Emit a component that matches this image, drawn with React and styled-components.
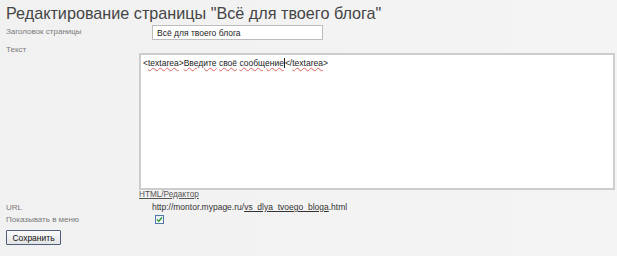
import styled, { createGlobalStyle } from "styled-components";

const GlobalStyle = createGlobalStyle`
  html, body {
    margin: 0;
    padding: 0;
    background: #f2f2f2;
  }
  body {
    font-family: "Liberation Sans", Arial, sans-serif;
  }
`;

const Page = styled.div`
  width: 617px;
  height: 256px;
  padding: 0 2px 0 6px;
  box-sizing: border-box;
  background: linear-gradient(to right, #f1f1f1, #f4f4f4);
  overflow: hidden;
`;

const Title = styled.h1`
  margin: 0;
  padding-top: 1px;
  font-size: 16.2px;
  line-height: 24px;
  font-weight: normal;
  color: #454545;
`;

const Row = styled.div`
  display: grid;
  grid-template-columns: 133px 1fr;
  align-items: start;
  margin-top: ${({ $gap }) => $gap || 0}px;
`;

const Label = styled.div`
  font-size: 8px;
  line-height: 11px;
  color: #7a7a7a;
  padding-top: ${({ $top }) => $top || 0}px;
`;

const TitleInput = styled.input`
  margin: 0 0 0 13px;
  width: 171px;
  height: 15px;
  box-sizing: border-box;
  border: 1px solid #bdbdbd;
  background: #fff;
  padding: 0 4px;
  font-family: inherit;
  font-size: 8.5px;
  color: #222;
  outline: none;
`;

const Editor = styled.div`
  width: 476px;
  height: 137px;
  box-sizing: border-box;
  border: 2px solid #cdcdcd;
  background: #fff;
  padding: 3px 2px;
  font-size: 8.5px;
  line-height: 10px;
  color: #222;
`;

const Spell = styled.span`
  text-decoration: underline wavy #e06060;
  text-decoration-thickness: 1px;
  text-underline-offset: 1px;
`;

const Caret = styled.span`
  display: inline-block;
  width: 1px;
  height: 10px;
  background: #222;
  vertical-align: -2px;
`;

const EditorLink = styled.a`
  display: block;
  font-size: 8.2px;
  line-height: 10px;
  color: #555;
  text-decoration: underline;
`;

const Value = styled.div`
  margin-left: 13px;
  font-size: 8.5px;
  line-height: 11px;
  color: #333;
`;

const Slug = styled.span`
  text-decoration: underline;
`;

const Check = styled.span`
  display: inline-flex;
  align-items: center;
  justify-content: center;
  margin-left: 16px;
  margin-top: 1px;
  width: 9px;
  height: 9px;
  box-sizing: border-box;
  border: 1px solid #4f77a8;
  background: linear-gradient(#e4ecf5, #ffffff);
`;

const Button = styled.button`
  margin-top: 5px;
  width: 55px;
  height: 15px;
  padding: 0;
  font-family: inherit;
  font-size: 8.5px;
  color: #111;
  border: 1px solid #4b5f7d;
  border-radius: 1px;
  background: linear-gradient(#fbfbfb, #e3e3e3);
`;

export default function App() {
  return (
    <Page>
      <GlobalStyle />
      <Title>Редактирование страницы "Всё для твоего блога"</Title>
      <Row>
        <Label $top={1}>Заголовок страницы</Label>
        <TitleInput defaultValue="Всё для твоего блога" />
      </Row>
      <Row $gap={4}>
        <Label>Текст</Label>
        <div>
          <div style={{ height: 9 }} />
          <Editor>
            &lt;<Spell>textarea</Spell>&gt;<Spell>Введите</Spell> <Spell>своё</Spell>{" "}
            <Spell>сообщение</Spell>
            <Caret />
            &lt;/<Spell>textarea</Spell>&gt;
          </Editor>
          <EditorLink>HTML/Редактор</EditorLink>
        </div>
      </Row>
      <Row $gap={2}>
        <Label>URL</Label>
        <Value>
          http://montor.mypage.ru/<Slug>vs_dlya_tvoego_bloga</Slug>.html
        </Value>
      </Row>
      <Row $gap={1}>
        <Label>Показывать в меню</Label>
        <Check>
          <svg width="7" height="7" viewBox="0 0 7 7">
            <path d="M1 3.5 L2.8 5.2 L6 1.5" fill="none" stroke="#2e9a2e" strokeWidth="1.4" />
          </svg>
        </Check>
      </Row>
      <Button>Сохранить</Button>
    </Page>
  );
}
